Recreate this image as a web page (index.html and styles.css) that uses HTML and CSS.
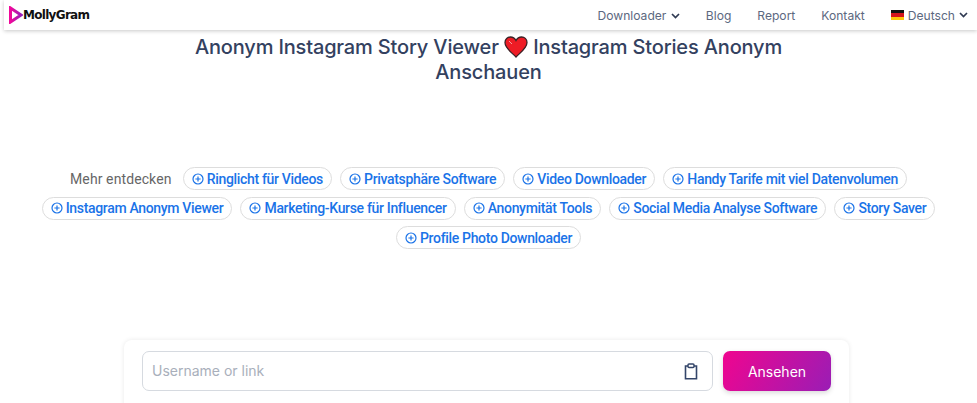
FILE: index.html
```html
<!DOCTYPE html>
<html lang="de">
<head>
    <meta charset="UTF-8">
    <title>MollyGram</title>
    <link rel="stylesheet" href="styles.css">
</head>
<body>
    <div class="header">
        <a class="logo">
            <svg width="14" height="18" viewBox="0 0 14 18">
                <defs>
                    <linearGradient id="logoGrad" x1="0" y1="0" x2="1" y2="0">
                        <stop offset="0" stop-color="#f0089a"/>
                        <stop offset="1" stop-color="#9a1fb8"/>
                    </linearGradient>
                </defs>
                <path d="M1.5 2 L12 9 L1.5 16 Z" fill="none" stroke="url(#logoGrad)" stroke-width="3"/>
            </svg>
            <span>MollyGram</span>
        </a>
        <div class="nav">
            <a>Downloader <svg class="chev" width="9" height="6" viewBox="0 0 9 6"><path d="M1 1 L4.5 4.5 L8 1" fill="none" stroke="#2f3a52" stroke-width="1.7"/></svg></a>
            <a>Blog</a>
            <a>Report</a>
            <a>Kontakt</a>
            <a class="lang">
                <span class="flag"><i class="black"></i><i class="red"></i><i class="gold"></i></span>
                <span>Deutsch</span>
                <svg class="chev" width="9" height="6" viewBox="0 0 9 6"><path d="M1 1 L4.5 4.5 L8 1" fill="none" stroke="#2f3a52" stroke-width="1.7"/></svg>
            </a>
        </div>
    </div>

    <h1 class="title">Anonym Instagram Story Viewer
        <svg class="heart" width="24" height="22" viewBox="0 0 24 22"><path d="M12 21 C7 16 1 12 1 6.5 C1 3 3.6 1 6.4 1 C8.8 1 10.8 2.2 12 4.5 C13.2 2.2 15.2 1 17.6 1 C20.4 1 23 3 23 6.5 C23 12 17 16 12 21 Z" fill="#ee1c25" stroke="#3a2226" stroke-width="1.3"/><path d="M5 5 L8 8" stroke="#f5a0a0" stroke-width="1"/></svg>
        Instagram Stories Anonym<br>Anschauen</h1>

    <div class="chips">
        <span class="chips-label">Mehr entdecken</span>
        <a class="chip"><svg class="plus" viewBox="0 0 12 12"><circle cx="6" cy="6" r="5" /><path d="M6 3.4 V8.6 M3.4 6 H8.6"/></svg>Ringlicht für Videos</a>
        <a class="chip"><svg class="plus" viewBox="0 0 12 12"><circle cx="6" cy="6" r="5" /><path d="M6 3.4 V8.6 M3.4 6 H8.6"/></svg>Privatsphäre Software</a>
        <a class="chip"><svg class="plus" viewBox="0 0 12 12"><circle cx="6" cy="6" r="5" /><path d="M6 3.4 V8.6 M3.4 6 H8.6"/></svg>Video Downloader</a>
        <a class="chip"><svg class="plus" viewBox="0 0 12 12"><circle cx="6" cy="6" r="5" /><path d="M6 3.4 V8.6 M3.4 6 H8.6"/></svg>Handy Tarife mit viel Datenvolumen</a>
        <a class="chip"><svg class="plus" viewBox="0 0 12 12"><circle cx="6" cy="6" r="5" /><path d="M6 3.4 V8.6 M3.4 6 H8.6"/></svg>Instagram Anonym Viewer</a>
        <a class="chip"><svg class="plus" viewBox="0 0 12 12"><circle cx="6" cy="6" r="5" /><path d="M6 3.4 V8.6 M3.4 6 H8.6"/></svg>Marketing-Kurse für Influencer</a>
        <a class="chip"><svg class="plus" viewBox="0 0 12 12"><circle cx="6" cy="6" r="5" /><path d="M6 3.4 V8.6 M3.4 6 H8.6"/></svg>Anonymität Tools</a>
        <a class="chip"><svg class="plus" viewBox="0 0 12 12"><circle cx="6" cy="6" r="5" /><path d="M6 3.4 V8.6 M3.4 6 H8.6"/></svg>Social Media Analyse Software</a>
        <a class="chip"><svg class="plus" viewBox="0 0 12 12"><circle cx="6" cy="6" r="5" /><path d="M6 3.4 V8.6 M3.4 6 H8.6"/></svg>Story Saver</a>
        <a class="chip"><svg class="plus" viewBox="0 0 12 12"><circle cx="6" cy="6" r="5" /><path d="M6 3.4 V8.6 M3.4 6 H8.6"/></svg>Profile Photo Downloader</a>
    </div>

    <div class="search">
        <div class="search-input">
            <span class="placeholder">Username or link</span>
            <svg width="14" height="17" viewBox="0 0 14 17"><path d="M4 3 H1.5 V15.8 H12.5 V3 H10" fill="none" stroke="#34466a" stroke-width="1.6"/><rect x="4" y="1" width="6" height="3.4" rx="1" fill="none" stroke="#34466a" stroke-width="1.5"/></svg>
        </div>
        <button class="search-btn">Ansehen</button>
    </div>
</body>
</html>
```

FILE: styles.css
```css
html, body {
    height: 403px;
    overflow: hidden;
}
body {
    font-family: "Inter", "Open Sans", sans-serif;
    margin: 0;
    padding: 0;
    background-color: #fff;
    color: #333;
}
.header {
    display: flex;
    justify-content: space-between;
    align-items: center;
    height: 30px;
    margin-left: 4px;
    padding: 0 9px 0 5px;
    background-color: #fff;
    box-shadow: 0 1px 4px rgba(0, 0, 0, 0.22);
}
.logo {
    display: flex;
    align-items: center;
    color: #111;
    font-family: "DejaVu Sans", sans-serif;
    font-size: 12px;
    font-weight: bold;
    letter-spacing: -0.7px;
}
.nav {
    display: flex;
    align-items: center;
    gap: 26px;
    font-size: 12.1px;
    color: #5c6880;
}
.lang {
    display: flex;
    align-items: center;
    gap: 3px;
}
.chev {
    margin-left: 1px;
    vertical-align: 1px;
}
.flag {
    display: flex;
    flex-direction: column;
    width: 13px;
    height: 10px;
    margin-right: 1px;
}
.flag i {
    flex: 1;
}
.flag .black { background: #111; }
.flag .red { background: #d3141c; }
.flag .gold { background: #fcc60c; }

.title {
    width: 620px;
    margin: 5px auto 0;
    font-size: 20px;
    line-height: 25px;
    font-weight: 450;
    letter-spacing: -0.16px;
    text-align: center;
    color: #33415f;
}
.heart {
    vertical-align: -4px;
    margin-top: -3px;
}

.chips {
    display: flex;
    flex-wrap: wrap;
    justify-content: center;
    align-items: center;
    gap: 6.5px 8.2px;
    width: 920px;
    margin: 82px auto 0;
    font-family: "Roboto", sans-serif;
}
.chips-label {
    margin-right: 3px;
    font-size: 14px;
    color: #666;
    letter-spacing: 0.1px;
}
.chip {
    display: flex;
    align-items: center;
    gap: 3px;
    height: 21px;
    padding: 0 8px;
    border: 1px solid #ddd;
    border-radius: 12px;
    font-size: 14px;
    font-weight: 500;
    letter-spacing: -0.33px;
    color: #1a73e8;
}
.plus {
    width: 12px;
    height: 12px;
    fill: none;
    stroke: #1a73e8;
    stroke-width: 1.2;
}

.search {
    display: flex;
    gap: 10px;
    width: 689px;
    height: 63px;
    margin: 91px 0 0 124px;
    padding: 11px 18px 0;
    border-radius: 8px;
    box-shadow: 0 0 5px rgba(0, 0, 0, 0.09);
}
.search-input {
    display: flex;
    justify-content: space-between;
    align-items: center;
    flex: 1;
    height: 38px;
    padding: 0 14px 0 9px;
    border: 1px solid #d6dae0;
    border-radius: 7px;
}
.placeholder {
    margin-top: -2px;
    font-size: 14px;
    color: #a9afbb;
}
.search-btn {
    width: 108px;
    height: 40px;
    border: none;
    border-radius: 7px;
    background: linear-gradient(120deg, #f0058f, #9a1db5);
    box-shadow: 0 2px 5px rgba(0, 0, 0, 0.15);
    color: white;
    font-family: inherit;
    font-size: 14px;
}
```
